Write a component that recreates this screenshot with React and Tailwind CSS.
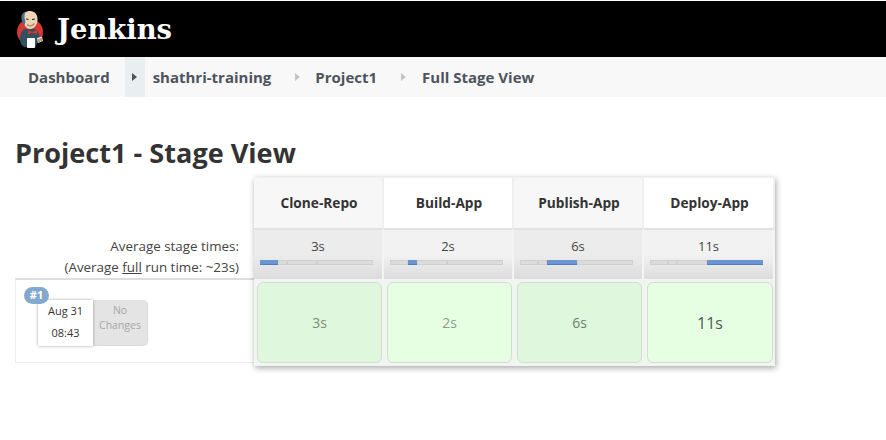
const font = { fontFamily: '"Open Sans", sans-serif' };

function Logo() {
  return (
    <svg width="30" height="40" viewBox="15 9 30 40" className="shrink-0">
      <circle cx="30" cy="31" r="13" fill="#d33833" />
      <path d="M21 43 C19 37 20 32 24 28 L35 28 C38 30 40 34 40 37 L37 42 L35 47 L24 46 Z" fill="#335061" />
      <path d="M22.5 17 C22.5 12 26 10 30 10 C35 10 38 14 37.5 19 C37.5 24 34 28 30 28 C26 28 23 23 22.5 17 Z" fill="#f0d6b7" />
      <path d="M22 20 C20.5 15 22 12 25.5 10.8 C24 14 24.5 18 25.5 21 L24 25 Z" fill="#49728b" />
      <path d="M26 18 L28.5 18.5 M32 18.5 L35 18" stroke="#231f20" strokeWidth="1" />
      <path d="M27 23.5 C29 25.5 32 25.5 34.5 22.5" stroke="#a6846a" strokeWidth="1.2" fill="none" />
      <path d="M28 29 L32 31 L37 29 L37 33 L32 31.8 L28 33.5 Z" fill="#d33833" />
      <rect x="27" y="37" width="8" height="10" rx="1" fill="#ffffff" />
      <path d="M37 37 L42 35.5 L43 40 L38 42 Z" fill="#f0d6b7" />
      <path d="M39 38 L39 41 M41 37 L41 40" stroke="#231f20" strokeWidth="0.6" />
    </svg>
  );
}

function Arrow({ light }) {
  return (
    <span
      className={`block w-0 h-0 border-y-[4px] border-y-transparent border-l-[5px] ${
        light ? "border-l-[#c4c4c4]" : "border-l-[#4d545d]"
      }`}
    />
  );
}

const widths = [18, 9, 30, 56];
const stages = [
  { name: "Clone-Repo", avg: "3s", active: 0, head: "bg-[#f7f7f7]", avgBg: "bg-[#ececec]", cell: "bg-[#dff7dd]", text: "text-[#7c8c7c]" },
  { name: "Build-App", avg: "2s", active: 1, head: "bg-white", avgBg: "bg-[#f2f2f2]", cell: "bg-[#e6ffe3]", text: "text-[#8f9c8f]" },
  { name: "Publish-App", avg: "6s", active: 2, head: "bg-[#f7f7f7]", avgBg: "bg-[#ececec]", cell: "bg-[#dff7dd]", text: "text-[#6f7f6f]" },
  { name: "Deploy-App", avg: "11s", active: 3, head: "bg-white", avgBg: "bg-[#f2f2f2]", cell: "bg-[#e6ffe3]", text: "text-[#4e5a52] text-[16px]" },
];

function Bar({ active }) {
  return (
    <div className="flex w-[113px] h-[5px] mt-[6px] self-start ml-[6px]">
      {widths.map((w, i) => (
        <div
          key={i}
          style={{ width: w }}
          className={
            i === active
              ? "h-full bg-[#6a95d3] border-b border-[#4f7fc4]"
              : "h-full bg-[#dcdcdc] border border-[#d0d0d0]"
          }
        />
      ))}
    </div>
  );
}

export default function App() {
  return (
    <div style={font} className="w-[886px] h-[440px] bg-white overflow-hidden text-[#333]">
      <header className="h-[57px] mt-px bg-black flex items-center pl-[15px] gap-[12px]">
        <Logo />
        <span
          style={{ fontFamily: '"DejaVu Serif", serif' }}
          className="text-white font-bold text-[27.4px] leading-none"
        >
          Jenkins
        </span>
      </header>
      <nav className="h-[40px] -mt-px bg-[#f8f8f8] flex items-center text-[15px] font-bold text-[#4d545d] pl-[28px]">
        <span>Dashboard</span>
        <span className="ml-[15px] w-[20px] h-full bg-[#e9eef1] flex items-center justify-center">
          <Arrow />
        </span>
        <span className="ml-[8px]">shathri-training</span>
        <span className="ml-[24px]"><Arrow light /></span>
        <span className="ml-[15px]">Project1</span>
        <span className="ml-[24px]"><Arrow light /></span>
        <span className="ml-[16px]">Full Stage View</span>
      </nav>
      <h1 className="mt-[36px] ml-[15px] text-[27.1px] leading-[40px] font-bold text-[#333]">
        Project1 - Stage View
      </h1>
      <div className="flex ml-[15px] mt-[4px]">
        <div className="w-[239px] shrink-0 flex flex-col">
          <div className="h-[51px]" />
          <div className="h-[50px] pr-[15px] text-right text-[13.4px] leading-[21px] text-[#444] pt-[8px]">
            <div className="whitespace-nowrap">Average stage times:</div>
            <div className="whitespace-nowrap">
              (Average <span className="underline">full</span> run time: ~23s)
            </div>
          </div>
          <div className="h-[85px] border border-[#eeeeee] border-t-2 border-t-[#dddddd] border-r-0">
            <div className="relative ml-[22px] mt-[20px] flex w-[110px] h-[46px]">
              <span className="absolute -left-[14px] -top-[13px] z-10 w-[25px] h-[17px] rounded-full bg-[#84a9cf] text-white text-[11px] font-bold flex items-center justify-center">
                #1
              </span>
              <div className="w-[55px] h-[46px] bg-white shadow-[0_0_3px_rgba(0,0,0,0.35)] text-[11px] leading-[22px] text-center text-[#333] z-[1]">
                <div>Aug 31</div>
                <div>08:43</div>
              </div>
              <div className="w-[55px] h-[46px] rounded-r-[5px] bg-[#e4e4e4] border-r border-b border-[#d8d8d8] text-[10.5px] leading-[15px] text-center text-[#a6a6a6] pt-[3px]">
                <div>No</div>
                <div>Changes</div>
              </div>
            </div>
          </div>
        </div>
        <div className="w-[521px] shrink-0 grid grid-cols-[130px_130px_130px_131px] bg-[#f0f5ef] border-t border-[#eef2ee] shadow-[1px_2px_6px_rgba(0,0,0,0.35)] self-start">
          {stages.map((s) => (
            <div
              key={s.name}
              className={`h-[50px] pt-px pl-[2px] ${s.head} border-r-2 border-[#f0f0f0] flex items-center justify-center text-[13.7px] font-bold text-[#333]`}
            >
              {s.name}
            </div>
          ))}
          {stages.map((s) => (
            <div
              key={s.name}
              className={`h-[51px] ${s.avgBg} bg-gradient-to-b from-transparent via-transparent to-[#dcdcdc] border-t-2 border-[#e2e2e2] border-r-2 border-r-[#f4f4f4] flex flex-col items-center text-[13px] leading-[16px] text-[#444] pt-[8px]`}
            >
              <div>{s.avg}</div>
              <Bar active={s.active} />
            </div>
          ))}
          {stages.map((s) => (
            <div key={s.name} className="h-[87px] pl-[3px] pr-[2px] pt-[3px] pb-[3px]">
              <div
                className={`h-full rounded-[6px] border border-[#d4dcd4] ${s.cell} flex items-center justify-center text-[14px] ${s.text}`}
              >
                {s.avg}
              </div>
            </div>
          ))}
        </div>
      </div>
    </div>
  );
}
